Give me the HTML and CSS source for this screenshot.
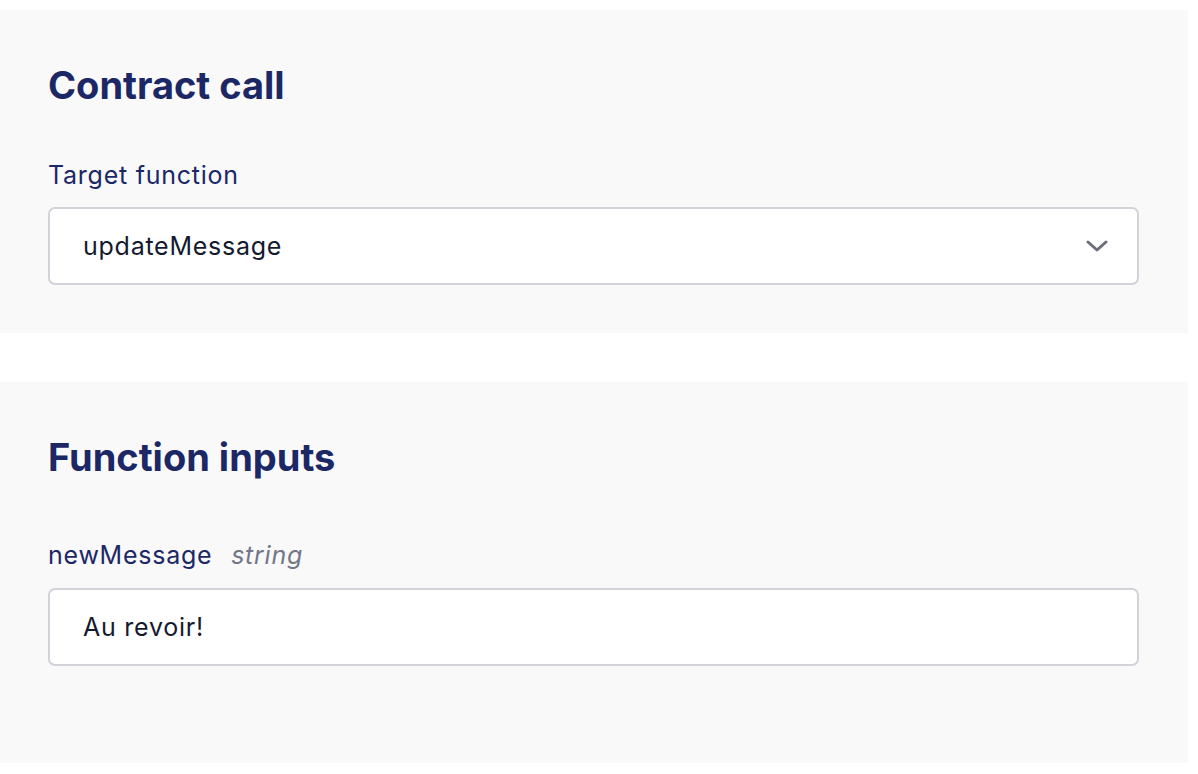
FILE: index.html
```html
<!DOCTYPE html>
<html lang="en">
<head>
<meta charset="utf-8">
<title>Contract call</title>
<link rel="stylesheet" href="styles.css">
</head>
<body>
<div class="page">
  <section class="panel panel-contract">
    <h2 class="panel-title">Contract call</h2>
    <div class="field-label label-target">Target function</div>
    <div class="field-box select-box">
      <span class="field-value">updateMessage</span>
      <svg class="chevron" width="22" height="12" viewBox="0 0 22 12" aria-hidden="true">
        <path d="M2 2 L11 10 L20 2" fill="none" stroke="#6b6e7b" stroke-width="3" stroke-linecap="round" stroke-linejoin="round"/>
      </svg>
    </div>
  </section>
  <section class="panel panel-inputs">
    <h2 class="panel-title">Function inputs</h2>
    <div class="field-label label-input">newMessage <span class="type">string</span></div>
    <div class="field-box input-box">
      <span class="field-value">Au revoir!</span>
    </div>
  </section>
</div>
</body>
</html>
```

FILE: styles.css
```css
html, body {
  margin: 0;
  padding: 0;
  background: #ffffff;
}

body {
  font-family: Inter, "Noto Sans", sans-serif;
  color: #141a2e;
}

.page {
  width: 1188px;
  padding-top: 10px;
  display: flex;
  flex-direction: column;
  gap: 49px;
}

.panel {
  background: #f9f9fa;
  padding: 53px 49px 0 48px;
  display: flex;
  flex-direction: column;
}

.panel-contract {
  padding-bottom: 48px;
}

.panel-inputs {
  padding-bottom: 97px;
}

.panel-title {
  margin: 0;
  font-size: 38px;
  line-height: 44px;
  font-weight: 700;
  color: #1c2866;
  letter-spacing: 0;
}

.field-label {
  font-size: 25px;
  line-height: 32px;
  letter-spacing: 0.75px;
  color: #1c2866;
  margin-bottom: 16px;
}

.label-target {
  margin-top: 52px;
}

.label-input {
  margin-top: 60px;
  margin-bottom: 17px;
}

.type {
  font-style: italic;
  color: #737687;
  margin-left: 11px;
}

.field-box {
  box-sizing: border-box;
  height: 78px;
  background: #ffffff;
  border: 2px solid #d2d3d9;
  border-radius: 7px;
  padding: 0 29px 0 33px;
  display: flex;
  align-items: center;
  justify-content: space-between;
}

.field-value {
  font-size: 25px;
  letter-spacing: 0.75px;
  color: #141a2e;
}
```
